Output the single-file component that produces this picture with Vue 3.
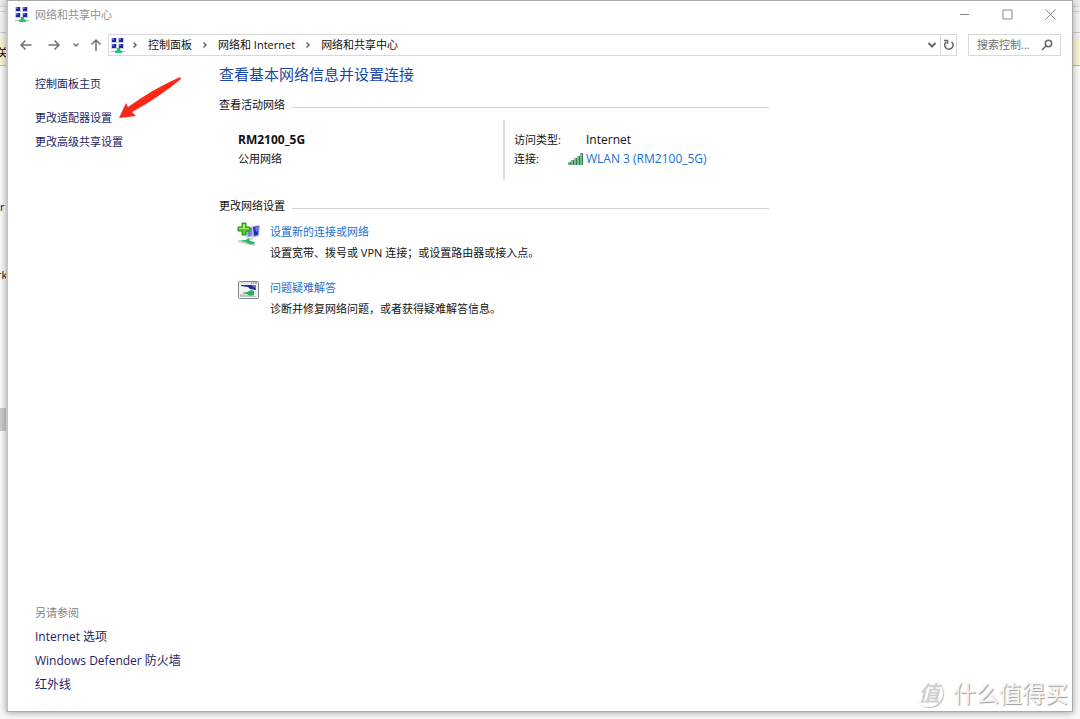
<script setup>
const crumbs = ['控制面板', '网络和 Internet', '网络和共享中心']
const tasks = ['更改适配器设置', '更改高级共享设置']
const related = ['Internet 选项', 'Windows Defender 防火墙', '红外线']
const screens = [[1, 0], [8, 0], [1, 6], [8, 6]]
</script>

<template>
  <div class="desktop">
    <div class="behind" aria-hidden="true">
      <span class="frag frag-a">关</span>
      <span class="frag frag-b">r</span>
      <span class="frag frag-c">rk</span>
      <span class="thumb"></span>
    </div>

    <div class="window">
      <header class="titlebar">
        <svg class="net" viewBox="0 0 14 15">
          <g v-for="(s, i) in screens" :key="i">
            <rect :x="s[0] - 1" :y="s[1]" width="6" height="5" fill="#c9cdd6" />
            <rect :x="s[0]" :y="s[1]" width="4" height="4" fill="#1c22b4" />
            <rect :x="s[0]" :y="s[1]" width="2" height="2" fill="#5a68dc" />
          </g>
          <path d="M0 13h14v1H0z" fill="#a8b8b4" />
          <path d="M6 10h3v2l2 1v2H4v-2l2-1z" fill="#18c878" />
        </svg>
        <span class="title">网络和共享中心</span>
        <div class="controls">
          <button aria-label="最小化"><svg viewBox="0 0 11 11"><path d="M1 5.5h9" /></svg></button>
          <button aria-label="最大化"><svg viewBox="0 0 11 11"><path d="M1 1h9v9H1z" /></svg></button>
          <button aria-label="关闭"><svg viewBox="0 0 11 11"><path d="M.5.5l10 10M10.500.5l-10 10" /></svg></button>
        </div>
      </header>

      <div class="toolbar">
        <nav class="history" aria-label="历史">
          <button class="wide" aria-label="后退"><svg viewBox="0 0 12 12"><path d="M11.500 6H1M5.500 1.500L1 6l4.500 4.500" /></svg></button>
          <button class="wide" aria-label="前进"><svg viewBox="0 0 12 12"><path d="M.5 6H11M6.500 1.500L11 6l-4.500 4.500" /></svg></button>
          <button class="small" aria-label="最近位置"><svg viewBox="0 0 12 12"><path d="M3.500 4.500L6 7l2.500-2.500" /></svg></button>
          <button class="up" aria-label="向上"><svg viewBox="0 0 12 12"><path d="M6 12V1M1.500 5.500L6 1l4.500 4.500" /></svg></button>
        </nav>
        <div class="address">
          <svg class="net" viewBox="0 0 14 15">
            <g v-for="(s, i) in screens" :key="i">
              <rect :x="s[0] - 1" :y="s[1]" width="6" height="5" fill="#c9cdd6" />
              <rect :x="s[0]" :y="s[1]" width="4" height="4" fill="#1c22b4" />
              <rect :x="s[0]" :y="s[1]" width="2" height="2" fill="#5a68dc" />
            </g>
            <path d="M0 13h14v1H0z" fill="#a8b8b4" />
            <path d="M6 10h3v2l2 1v2H4v-2l2-1z" fill="#18c878" />
          </svg>
          <template v-for="c in crumbs" :key="c">
            <svg class="chev" viewBox="0 0 6 8"><path d="M1.500 1.500L4 4 1.500 6.500" /></svg>
            <a href="#">{{ c }}</a>
          </template>
          <button class="drop" aria-label="以前的位置"><svg viewBox="0 0 10 10"><path d="M1.500 3L5 6.500 8.500 3" /></svg></button>
          <button class="reload" aria-label="刷新"><svg viewBox="0 0 12 12"><path d="M3 3A4.200 4.200 0 1 0 8.500 2.800M1 1.500h3.500V5" /></svg></button>
        </div>
        <label class="search">
          <input type="text" placeholder="搜索控制..." aria-label="搜索控制面板" />
          <svg viewBox="0 0 12 12"><circle cx="7.500" cy="4.500" r="3.200" /><path d="M5 7L1 11" /></svg>
        </label>
      </div>

      <div class="body">
        <aside class="side">
          <a href="#" class="home">控制面板主页</a>
          <a v-for="t in tasks" :key="t" href="#">{{ t }}</a>
          <p class="see">另请参阅</p>
          <a v-for="r in related" :key="r" href="#" class="related">{{ r }}</a>
          <svg class="pointer" viewBox="0 0 64 43">
            <path d="M1 41L8 26l2 4Q35 12 62 0l1 2Q40 21 14 35l4 4z" fill="#fb2818" />
          </svg>
        </aside>

        <main class="content">
          <h1>查看基本网络信息并设置连接</h1>
          <h2><span>查看活动网络</span></h2>
          <section class="active">
            <div class="name">
              <b>RM2100_5G</b>
              <span>公用网络</span>
            </div>
            <dl>
              <dt>访问类型:</dt>
              <dd>Internet</dd>
              <dt>连接:</dt>
              <dd class="wifi">
                <svg viewBox="0 0 15 12">
                  <path d="M0 12V9h3v3zM3 12V7h3v5zM6 12V5h3v7zM9 12V3h3v9zM12 12V0h3v12z" fill="#7cbb8f" />
                  <path d="M2.500 9v3M5.500 7v5M8.500 5v7M11.500 3v9M14.500 0v12" stroke="#2b7d47" />
                </svg>
                <a href="#">WLAN 3 (RM2100_5G)</a>
              </dd>
            </dl>
          </section>

          <h2><span>更改网络设置</span></h2>
          <ul>
            <li>
              <svg viewBox="0 0 24 24">
                <path d="M8 6l9-2 1 10-9 2z" fill="#cbd0dc" />
                <path d="M10 7l7-2v8l-6 2z" fill="#7a86dd" />
                <path d="M15 4l8-1-1 11-7 2z" fill="#bec4d5" />
                <path d="M16 5l6-1-1 9-4 1z" fill="#242bc4" />
                <path d="M18 5l4-1v4l-3 2z" fill="#6c79df" />
                <path d="M10 16l6-1v3h-5z" fill="#d5dae0" />
                <path d="M1 18l17 4v2L1 20z" fill="#c5ccd0" />
                <path d="M3 18q5 1 9-2l1 3 5 1-1 2q-6 1-8-2-3 0-6-2z" fill="#24bd62" />
                <path d="M5 1h4v4h4v4H9v4H5V9H1V5h4z" fill="#55cc27" stroke="#238a1a" />
                <path d="M6 2h2v4h4v1H2V6h4z" fill="#a2ec68" />
              </svg>
              <div>
                <a href="#">设置新的连接或网络</a>
                <p>设置宽带、拨号或 VPN 连接；或设置路由器或接入点。</p>
              </div>
            </li>
            <li>
              <svg viewBox="0 0 24 24">
                <rect x="1.500" y="3.500" width="20" height="17" rx="1" fill="#f2f3f5" stroke="#7e858d" />
                <path d="M2 4h19v2H2z" fill="#dce0e5" />
                <path d="M14 5h1M16 5h1M18 5h2" stroke="#777" />
                <path d="M4 7h15v5l-6-1-2-2-7-1z" fill="#222a9c" />
                <path d="M14 7h5v4z" fill="#6575cd" />
                <path d="M3 16l16 2v1H3z" fill="#bdc5c9" />
                <path d="M5 15q5 0 9-3l3 1v4q-5 2-7-1-3 0-5-1z" fill="#20b654" />
              </svg>
              <div>
                <a href="#">问题疑难解答</a>
                <p>诊断并修复网络问题，或者获得疑难解答信息。</p>
              </div>
            </li>
          </ul>
        </main>
      </div>
    </div>

    <div class="mark"><span class="seal">值</span><span>什么值得买</span></div>
  </div>
</template>

<style>
body {
  margin: 0;
}
</style>

<style scoped>
* {
  box-sizing: border-box;
}
.desktop {
  position: relative;
  display: flex;
  min-height: 100vh;
  padding: 0 7px 7px 6px;
  overflow: hidden;
  background: #f6f6f6;
  color: #111;
  font: 11px/16px "Open Sans", "Noto Sans CJK SC", sans-serif;
}
.behind {
  position: absolute;
  inset: 0;
  background: linear-gradient(#eceef1 0 6px, #d8d8d8 6px 7px, #f5f5f5 7px 11px, #d4d4d4 11px 12px, #f5f5f5 12px 32px, #ccc 32px 33px, #f2f2f2 33px 40px, #f8f5cf 40px 65px, #bbb 65px 66px, #fafafa 66px);
}
.frag {
  position: absolute;
  left: 0;
}
.frag-a {
  top: 45px;
  left: -3px;
}
.frag-b {
  top: 199px;
}
.frag-c {
  top: 267px;
  left: -3px;
}
.thumb {
  position: absolute;
  top: 408px;
  left: 0;
  width: 7px;
  height: 23px;
  background: #ccc;
}
.window {
  position: relative;
  flex: 1;
  display: flex;
  flex-direction: column;
  border: 1px solid #aaa;
  border-left: 2px solid #c4c4c4;
  background: #fff;
  box-shadow: 0 1px 7px rgba(0, 0, 0, 0.35);
}
a {
  color: inherit;
  text-decoration: none;
  white-space: nowrap;
}
button {
  display: flex;
  align-items: center;
  justify-content: center;
  padding: 0;
  border: 0;
  background: none;
}
button svg,
.search svg,
.chev {
  fill: none;
  stroke: #666;
}
p,
h1,
h2,
dl,
dd,
ul {
  margin: 0;
  padding: 0;
}
.net {
  flex: none;
  width: 14px;
  height: 15px;
}
.titlebar {
  display: flex;
  align-items: center;
  height: 27px;
  padding-left: 7px;
}
.title {
  margin-left: 6px;
  color: #909090;
}
.controls {
  display: flex;
  margin-left: auto;
}
.controls button {
  width: 43px;
  height: 27px;
}
.controls svg {
  width: 11px;
  height: 11px;
  stroke: #888;
}
.toolbar {
  display: flex;
  align-items: center;
  margin-top: 6px;
  padding-right: 11px;
}
.history {
  display: flex;
  padding-left: 4px;
}
.history svg {
  width: 12px;
  height: 12px;
  stroke: #707070;
  stroke-width: 1.5;
}
.wide {
  width: 28px;
}
.small {
  width: 16px;
}
.up {
  width: 24px;
}
.address {
  flex: 1;
  display: flex;
  align-items: center;
  height: 22px;
  padding-left: 2px;
  border: 1px solid #d9d9d9;
}
.chev {
  width: 6px;
  height: 8px;
  margin: 0 10px;
  stroke-width: 1.5;
}
.net + .chev {
  margin-left: 7px;
}
.drop {
  width: 16px;
  height: 20px;
  margin-left: auto;
}
.drop svg {
  width: 10px;
  height: 10px;
  stroke-width: 2;
}
.reload {
  width: 16px;
  height: 20px;
  border-left: 1px solid #d9d9d9;
}
.reload svg {
  width: 12px;
  height: 12px;
  stroke-width: 1.5;
}
.search {
  display: flex;
  align-items: center;
  width: 93px;
  height: 22px;
  margin-left: 11px;
  padding: 0 7px 0 8px;
  border: 1px solid #d9d9d9;
}
.search input {
  flex: 1;
  min-width: 0;
  padding: 0;
  border: 0;
  outline: 0;
  background: none;
  font: inherit;
}
.search input::placeholder {
  color: #707070;
}
.search svg {
  width: 12px;
  height: 12px;
  stroke-width: 1.5;
}
.body {
  flex: 1;
  display: flex;
}
.side {
  position: relative;
  display: flex;
  flex-direction: column;
  width: 211px;
  padding: 16px 0 14px 27px;
  line-height: 24px;
  color: #1d2363;
}
.home {
  margin-bottom: 10px;
}
.see {
  margin-top: auto;
  color: #858585;
}
.related,
.name b,
dd {
  font-size: 12px;
}
.pointer {
  position: absolute;
  top: 21px;
  left: 110px;
  width: 64px;
  height: 43px;
}
.content {
  flex: 1;
  max-width: 550px;
  padding-top: 8px;
}
h1 {
  margin-bottom: 13px;
  color: #1848a8;
  font-size: 15px;
  font-weight: 400;
  line-height: 20px;
}
h2 {
  display: flex;
  align-items: center;
  gap: 7px;
  font-size: 11px;
  font-weight: 400;
  line-height: 16px;
}
h2::after {
  content: "";
  flex: 1;
  height: 1px;
  margin-top: 5px;
  background: #d4d4d4;
}
.active {
  display: flex;
  height: 60px;
  margin: 7px 0 18px 19px;
  line-height: 19px;
}
.name {
  display: flex;
  flex-direction: column;
  width: 265px;
  padding-top: 10px;
}
dl {
  display: grid;
  grid-template-columns: 72px auto;
  grid-auto-rows: 19px;
  padding: 10px 0 0 9px;
  border-left: 2px solid #dedede;
}
.wifi {
  display: flex;
  align-items: center;
  gap: 3px;
  margin-left: -18px;
}
.wifi svg {
  width: 15px;
  height: 12px;
}
.wifi a,
li a {
  color: #1670cf;
}
ul {
  margin: 7px 0 0 18px;
  list-style: none;
}
li {
  display: flex;
  gap: 9px;
  margin-bottom: 14px;
  line-height: 21px;
}
li svg {
  width: 24px;
  height: 24px;
  margin-top: 1px;
}
.mark {
  position: absolute;
  right: 12px;
  bottom: 11px;
  display: flex;
  align-items: center;
  gap: 10px;
  color: #f4f4f4;
  font-size: 23px;
  line-height: 30px;
  text-shadow: 1px 1px 1px #999;
}
.seal {
  width: 28px;
  height: 28px;
  border-radius: 50%;
  box-shadow: 1px 1px 1px #bbb;
  color: #d0d0d0;
  font-size: 21px;
  font-style: italic;
  font-weight: 700;
  line-height: 28px;
  text-align: center;
  text-shadow: none;
}
</style>
